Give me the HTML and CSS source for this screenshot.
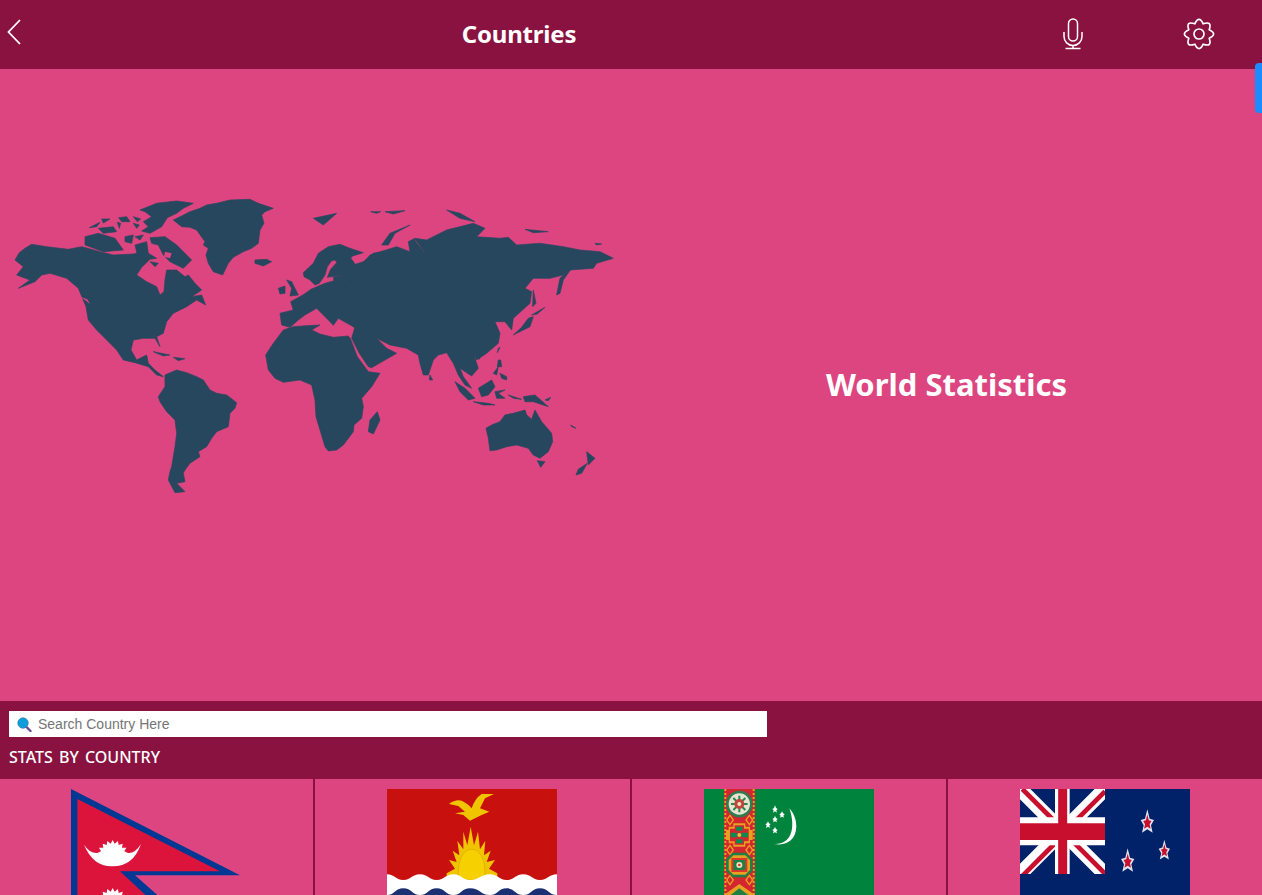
FILE: index.html
```html
<!DOCTYPE html>
<html lang="en">
<head>
    <meta charset="UTF-8">
    <meta name="viewport" content="width=device-width, initial-scale=1.0">
    <title>Countries</title>
    <link rel="stylesheet" href="styles.css">
</head>
<body>

    <header class="topbar">
        <svg class="back-icon" width="14" height="26" viewBox="0 0 14 26"><path d="M13 1 1.500 13 13 25" fill="none" stroke="#fff" stroke-width="1.800"/></svg>
        <h1 class="page-title">Countries</h1>
        <svg class="top-icon" width="20" height="32" viewBox="0 0 20 32">
            <rect x="5.500" y="1" width="9" height="22" rx="4.500" fill="none" stroke="#fff" stroke-width="1.500"/>
            <path d="M1 14v4.500a9 9 0 0 0 18 0V14M10 27.500V30M2.500 30.500h15" fill="none" stroke="#fff" stroke-width="1.500"/>
        </svg>
        <svg class="top-icon" width="32" height="32" viewBox="-16 -16 32 32">
            <path d="M10.200-4.200Q19 0 10.200 4.200 13.400 13.400 4.200 10.200 0 19-4.200 10.200-13.400 13.400-10.200 4.200-19 0-10.200-4.200-13.400-13.400-4.200-10.200 0-19 4.200-10.200 13.400-13.400 10.200-4.200Z" fill="none" stroke="#fff" stroke-width="1.700" stroke-linejoin="round"/>
            <circle r="5" fill="none" stroke="#fff" stroke-width="1.700"/>
        </svg>
    </header>

    <div class="scroll-tab"></div>

    <section class="hero">
        <svg class="world-map" width="631" height="632" viewBox="0 69 631 632" fill="#26475e" stroke="#26475e" stroke-width="2" stroke-linejoin="round">
            <!-- americas, greenland -->
            <g transform="translate(0 180) scale(.3333)">
                <path d="M45 240 58 218 75 205 95 193 140 200 205 208 245 200 300 215 340 225 400 222 430 215 450 232 445 243 425 262 410 285 440 305 470 320 480 345 492 335 495 300 500 270 530 270 555 290 565 285 585 310 605 330 575 350 605 345 617 375 590 360 560 380 530 395 520 400 500 425 490 460 470 470 480 500 465 475 430 475 400 480 393 510 410 540 440 525 445 550 465 570 490 590 470 585 445 560 405 548 370 540 350 510 320 480 290 450 265 420 258 380 235 325 200 295 150 280 125 285 105 305 55 325 90 300 50 285 70 260Z"/>
                <path d="M305 465 333 515 318 498Z" fill="#dc4580" stroke="none"/>
                <path d="M240 350 262 358 270 372 255 360Z" fill="#dc4580" stroke="none"/>
                <path d="M520 120 545 108 570 95 600 85 620 75 650 70 690 60 750 58 775 70 820 85 795 95 785 105 792 130 780 150 775 190 755 205 730 215 700 232 685 250 668 285 640 275 625 250 618 225 625 205 610 195 615 185 590 150 570 142 545 140Z"/>
                <path d="M765 240 800 238 815 245 790 258 765 250Z"/>
                <path d="M460 515 510 525 490 528Z"/>
                <path d="M520 532 555 536 535 542Z"/>
                <path d="M495 585 530 570 560 578 590 590 610 600 630 630 650 640 680 645 710 668 705 685 690 700 685 740 650 755 635 775 620 800 595 815 600 830 570 850 555 870 550 880 555 905 530 910 555 935 525 938 505 900 510 875 515 860 525 800 530 760 525 720 500 695 480 665 475 650 495 620Z"/>
            </g>
            <!-- canadian arctic -->
            <g transform="translate(80 195) scale(.3333)">
                <path d="M180 45 230 25 290 18 340 25 310 40 290 55 262 68 245 95 210 115 185 108 205 95 190 80 215 65 195 50Z"/>
                <path d="M116 68 140 65 150 80 125 80Z"/>
                <path d="M160 65 182 72 172 80Z"/>
                <path d="M65 72 90 72 70 84Z"/>
                <path d="M28 98 60 82 50 95Z"/>
                <path d="M55 100 100 95 110 110 70 115Z"/>
                <path d="M15 125 55 115 105 130 130 165 70 170 15 150Z"/>
                <path d="M135 125 160 120 155 145 135 140Z"/>
                <path d="M165 125 190 120 180 135Z"/>
                <path d="M160 85 178 90 170 100Z"/>
                <path d="M112 82 118 100 122 85Z"/>
                <path d="M210 128 255 125 290 150 335 195 310 220 270 200 250 180 235 150 215 145Z"/>
                <path d="M255 170 275 175 270 190 252 185Z" fill="#dc4580" stroke="none"/>
                <path d="M210 200 235 205 225 215Z"/>
                <path d="M165 150 200 140 205 175 230 190 195 195 172 180Z"/>
            </g>
            <!-- europe -->
            <g transform="translate(270 220) scale(.3333)">
                <path d="M30 280 70 270 62 245 100 224 123 208 130 205 165 190 192 182 190 172 226 164 172 172 182 148 200 128 196 120 185 122 172 140 165 165 148 190 135 195 120 180 102 170 100 158 130 130 145 100 175 80 210 73 240 85 280 98 248 108 242 114 256 133 280 125 310 100 390 85 390 330 260 330 250 320 205 295 190 316 175 300 140 265 105 285 85 300 60 322 35 315Z"/>
                <path d="M50 180 65 185 85 225 60 228 65 205Z"/>
                <path d="M25 205 45 198 45 220 30 222Z"/>
            </g>
            <!-- asia, africa, oceania -->
            <g transform="translate(300 190) scale(.3333)">
                <path d="M210 195 290 170 330 185 325 155 345 145 380 150 440 120 520 100 555 115 530 140 600 145 625 142 650 165 720 160 790 170 840 180 900 185 940 205 890 220 880 235 810 240 790 255 750 265 700 265 675 295 695 305 690 340 640 385 635 420 615 395 585 395 600 430 595 460 560 490 530 510 520 490 535 535 515 558 480 535 490 560 515 595 495 585 475 555 460 520 440 488 415 495 400 510 385 555 370 555 360 520 355 495 320 475 270 465 230 445 260 475 290 490 215 533 205 530 178 490 155 445 165 410 100 340Z"/>
                <path d="M60 405 35 420 60 432 100 442 145 438 152 448 172 500 205 545 240 550 215 590 185 625 190 650 185 685 162 705 160 725 130 765 110 780 85 783 75 770 60 720 48 680 45 630 35 585 0 570-50 577-75 565-95 540-103 495-80 460-50 420-20 410 20 407Z"/>
                <path d="M232 665 240 690 220 732 205 725 210 690Z"/>
                <path d="M390 555 398 570 388 570Z"/>
                <path d="M537 495 545 490 538 508Z"/>
                <path d="M595 475 600 472 592 488Z"/>
                <path d="M465 575 495 595 525 625 505 630 480 605Z"/>
                <path d="M535 595 575 570 585 590 565 615 545 620Z"/>
                <path d="M520 635 565 640 585 645 550 645Z"/>
                <path d="M585 605 615 600 595 610 615 625 590 625Z"/>
                <path d="M625 615 665 628 640 625Z"/>
                <path d="M670 620 705 615 745 650 700 635 675 635Z"/>
                <path d="M735 630 752 622 745 632Z"/>
                <path d="M595 510 602 510 605 530 592 530Z"/>
                <path d="M580 550 595 530 590 555Z"/>
                <path d="M600 550 620 560 620 570 605 565Z"/>
                <path d="M558 715 575 705 600 695 615 675 640 670 675 660 680 675 695 688 705 660 725 695 755 730 758 755 745 785 720 805 700 795 685 775 650 765 620 770 590 780 570 782 565 745Z"/>
                <path d="M712 812 735 815 722 832Z"/>
                <path d="M860 785 885 805 865 825 862 800Z"/>
                <path d="M862 820 845 850 828 855 835 838Z"/>
                <path d="M812 705 828 715 815 710Z"/>
                <path d="M640 435 665 412 685 385 700 380 690 410 650 430Z"/>
                <path d="M695 375 735 352 712 372Z"/>
                <path d="M700 300 708 340 698 350Z"/>
                <path d="M770 315 780 265 815 235 790 270 780 310Z"/>
                <path d="M245 165 270 130 330 105 285 130 265 165Z"/>
                <path d="M40 85 110 70 70 105Z"/>
                <path d="M212 65 242 65 230 70Z"/>
                <path d="M255 65 315 62 280 72Z"/>
                <path d="M440 60 480 70 525 95 480 85Z"/>
                <path d="M675 118 745 125 700 128Z"/>
                <path d="M885 160 905 162 890 165Z"/>
                <path d="M340 145 380 195 350 155Z" fill="#dc4580" stroke="none"/>
            </g>
        </svg>
        <h2 class="hero-title">World Statistics</h2>
    </section>

    <section class="search-bar">
        <div class="search-box">
            <svg class="search-icon" width="15" height="15" viewBox="0 0 15 15">
                <path d="M9 9.500 13.500 14" stroke="#6a4c93" stroke-width="2.400" stroke-linecap="round"/>
                <circle cx="6" cy="6" r="5.200" fill="#0d9fdc" stroke="#3f7fa8" stroke-width=".8"/>
            </svg>
            <input class="search-input" type="text" placeholder="Search Country Here">
        </div>
        <h3 class="stats-title">STATS BY COUNTRY</h3>
    </section>

    <section class="country-grid">
        <div class="country-cell">
            <svg class="flag" width="170" height="207" viewBox="213 268 510 621">
                <path d="M213 268 720 527 405 527 715 800V889H213Z" fill="#003893"/>
                <path d="M232 298 660 515 360 515 650 785V870H232Z" fill="#dc143c"/>
                <path d="M252 435Q280 502 338 500 400 500 423 433 405 462 384 460H292Q270 462 252 435Z" fill="#fff"/>
                <polygon id="nepalSun" fill="#fff" points="292,460 303,455 297,444 310,444 308,432 320,436 322,424 332,432 338,421 344,432 354,424 356,436 368,432 366,444 379,444 373,455 384,460"/>
                <use href="#nepalSun" y="144"/>
                <rect x="292" y="604" width="92" height="60" fill="#fff"/>
            </svg>
        </div>
        <div class="country-cell">
            <svg class="flag" width="170" height="113" viewBox="21 27 510 339">
                <rect x="21" y="27" width="510" height="339" fill="#c8100f"/>
                <path d="M207 72Q225 58 245 62 265 72 275 85 285 55 305 42L342 42 315 55 305 75 300 85 328 95 305 105 270 122 250 105 225 100 255 95 235 78Z" fill="#f0c400"/>
                <polygon fill="#f0c400" points="200,280 225,266 207,240 230,246 218,212 238,226 232,182 250,208 250,155 262,196 272,140 282,196 294,155 300,208 316,182 312,226 332,212 320,246 345,240 327,266 352,280 352,300 200,300"/>
                <path d="M235 300V270C238 228 255 208 275 208 295 208 312 228 315 270V300Z" fill="#f7d000" stroke="#d8a800" stroke-width="2"/>
                <path d="M21 283C45 283 45 300 70 300 95 300 95 283 120 283 145 283 145 300 170 300 195 300 195 283 220 283 245 283 245 300 270 300 300 300 300 283 330 283 355 283 355 300 380 300 405 300 405 283 430 283 455 283 455 300 480 300 505 300 505 283 531 283V366H21Z" fill="#fff"/>
                <path d="M21 345C45 345 45 325 70 325 95 325 95 345 120 345 145 345 145 325 170 325 195 325 195 345 220 345 245 345 245 325 270 325 300 325 300 345 330 345 355 345 355 325 380 325 405 325 405 345 430 345 455 345 455 325 480 325 505 325 505 345 531 345V366H21Z" fill="#1b2f73"/>
            </svg>
        </div>
        <div class="country-cell">
            <svg class="flag" width="170" height="113" viewBox="12 27 510 339">
                <defs>
                    <path id="sideMark" d="M0-14 10 0 0 14-10 0Z" fill="none" stroke="#e8a020" stroke-width="4"/>
                </defs>
                <rect x="12" y="27" width="510" height="339" fill="#00843d"/>
                <rect x="72" y="27" width="93" height="339" fill="#d22630"/>
                <path d="M76 27V366M161 27V366" stroke="#e8a020" stroke-width="6" stroke-dasharray="6 6"/>
                <use href="#sideMark" x="90" y="120"/>
                <use href="#sideMark" x="148" y="120"/>
                <use href="#sideMark" x="90" y="210"/>
                <use href="#sideMark" x="148" y="210"/>
                <use href="#sideMark" x="90" y="300"/>
                <use href="#sideMark" x="148" y="300"/>
                <circle cx="118" cy="72" r="40" fill="#2e7d4f"/>
                <circle cx="118" cy="72" r="32" fill="#e9e2cf"/>
                <path d="M93 72H143M118 47V97M100 54 136 90M136 54 100 90" stroke="#1f8a50" stroke-width="6"/>
                <circle cx="118" cy="72" r="15" fill="#c2453d"/>
                <circle cx="118" cy="72" r="6" fill="#f0e2c0"/>
                <path d="M100 130H136V140H150V150H158V180H150V190H136V200H100V190H86V180H78V150H86V140H100Z" fill="#e8a020"/>
                <path d="M104 136H132V146H146V184H132V194H104V184H90V146H104Z" fill="#d22630"/>
                <path d="M92 158H112V172H92ZM124 158H144V172H124ZM108 140H128V152H108ZM108 178H128V190H108Z" fill="#0d8a50"/>
                <circle cx="118" cy="165" r="6" fill="#e8c040"/>
                <path d="M98 218H138L158 238V272L138 292H98L78 272V238Z" fill="#1f7f45"/>
                <path d="M100 226H136L150 240V270L136 284H100L86 270V240Z" fill="#e8a020"/>
                <rect x="94" y="234" width="48" height="42" fill="#d8392c"/>
                <path d="M100 240H136V270H100Z" fill="#1f7f45"/>
                <circle cx="118" cy="255" r="9" fill="#f0e2c0"/>
                <circle cx="118" cy="255" r="4" fill="#d8392c"/>
                <path d="M118 312 165 345V366H72V345Z" fill="#e8a020"/>
                <path d="M118 325 145 345V366H92V345Z" fill="#1f7f45"/>
                <path d="M268 85C305 125 295 205 222 192 270 195 290 150 268 85Z" fill="#fff"/>
                <g fill="#fff">
                    <path d="M225 76 228 84 233 87 229 91 231 98 225 94 219 98 221 91 217 87 222 84Z"/>
                    <path d="M246 94 249 100 254 103 250 107 252 113 246 110 240 113 242 107 238 103 243 100Z"/>
                    <path d="M225 108 228 114 233 117 229 120 231 127 225 124 219 127 221 120 217 117 222 114Z"/>
                    <path d="M204 124 207 130 212 133 208 136 210 144 204 140 198 144 200 136 196 133 201 130Z"/>
                    <path d="M225 141 228 147 233 150 229 153 231 160 225 157 219 160 221 153 217 150 222 147Z"/>
                </g>
            </svg>
        </div>
        <div class="country-cell">
            <svg class="flag" width="170" height="113" viewBox="15 27 510 339">
                <defs>
                    <path id="nzStar" d="M0-40 7-12 20-8 11 8 16 30 0 20-16 30-11 8-20-8-7-12Z"/>
                    <clipPath id="canton"><rect x="15" y="27" width="255" height="255"/></clipPath>
                </defs>
                <rect x="15" y="27" width="510" height="339" fill="#012169"/>
                <g clip-path="url(#canton)">
                    <path d="M15 27 270 282M270 27 15 282" stroke="#fff" stroke-width="44"/>
                    <path d="M22 27 142 147M270 34 150 154M142 168 22 288M150 161 270 281" stroke="#c8102e" stroke-width="14"/>
                    <path d="M142 27V282" stroke="#fff" stroke-width="44"/>
                    <path d="M15 154H270" stroke="#fff" stroke-width="84"/>
                    <path d="M143 27V282" stroke="#c8102e" stroke-width="27"/>
                    <path d="M15 155H270" stroke="#c8102e" stroke-width="50"/>
                </g>
                <use href="#nzStar" x="397" y="128" fill="#dfe3ee"/>
                <use href="#nzStar" fill="#c8102e" transform="translate(397 128) scale(.62)"/>
                <use href="#nzStar" fill="#dfe3ee" transform="translate(448 213) scale(.85)"/>
                <use href="#nzStar" fill="#c8102e" transform="translate(448 213) scale(.52)"/>
                <use href="#nzStar" x="338" y="245" fill="#dfe3ee"/>
                <use href="#nzStar" fill="#c8102e" transform="translate(338 245) scale(.62)"/>
            </svg>
        </div>
    </section>

</body>
</html>
```

FILE: styles.css
```css
html, body {
    height: 895px;
    margin: 0;
    overflow: hidden;
}
body {
    font-family: "Noto Sans", Arial, sans-serif;
    background-color: #dc4580;
    color: white;
    position: relative;
}
.topbar {
    display: grid;
    grid-template-columns: 40px 958px 150px 102px;
    align-items: center;
    justify-items: center;
    height: 69px;
    background-color: #8a1240;
}
.back-icon {
    justify-self: start;
    margin: 0 0 6px 7px;
}
.top-icon {
    margin-bottom: 1px;
}
.page-title {
    margin: 0 0 3px;
    font-size: 24px;
    font-weight: 700;
    letter-spacing: -0.2px;
}
.scroll-tab {
    position: absolute;
    top: 63px;
    right: 0;
    width: 7px;
    height: 50px;
    background-color: #1a8cff;
    border-radius: 4px 0 0 4px;
}
.hero {
    display: grid;
    grid-template-columns: 631px 1fr;
    align-items: center;
    justify-items: center;
    height: 632px;
}
.world-map {
    display: block;
}
.hero-title {
    margin: 0 0 3px;
    font-size: 31px;
    font-weight: 700;
}
.search-bar {
    height: 78px;
    padding: 10px 9px 0;
    box-sizing: border-box;
    background-color: #8a1240;
}
.search-box {
    display: flex;
    align-items: center;
    gap: 6px;
    width: 758px;
    height: 26px;
    padding-left: 8px;
    box-sizing: border-box;
    background-color: white;
}
.search-icon {
    flex: none;
}
.search-input {
    flex: 1;
    border: none;
    outline: none;
    padding: 0;
    font-family: "Liberation Sans", Arial, sans-serif;
    font-size: 14px;
}
.stats-title {
    margin: 9px 0 0;
    font-size: 16px;
    font-weight: 500;
    line-height: 22px;
    word-spacing: 2px;
}
.country-grid {
    display: grid;
    grid-template-columns: 315px 317px 316px 1fr;
    height: 116px;
    overflow: hidden;
}
.country-cell {
    padding: 10px 0 0 72px;
    border-right: 2px solid #8a1240;
}
.country-cell:first-child {
    padding-left: 71px;
}
.country-cell:last-child {
    border-right: none;
}
.flag {
    display: block;
}
```
